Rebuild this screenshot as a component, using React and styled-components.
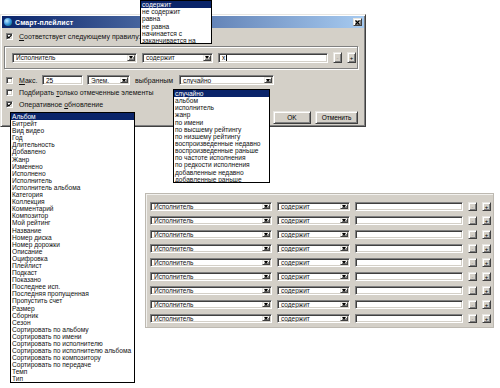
import React from "react";
import styled, { createGlobalStyle } from "styled-components";

const GlobalStyle = createGlobalStyle`
  html, body {
    margin: 0;
    padding: 0;
    background: #fff;
  }
  body {
    font-family: "Liberation Sans", Arial, sans-serif;
    font-size: 7px;
    color: #000;
  }
`;

const fields = [
  "Альбом", "Битрейт", "Вид видео", "Год", "Длительность", "Добавлено", "Жанр",
  "Изменено", "Исполнено", "Исполнитель", "Исполнитель альбома", "Категория",
  "Коллекция", "Комментарий", "Композитор", "Мой рейтинг", "Название",
  "Номер диска", "Номер дорожки", "Описание", "Оцифровка", "Плейлист", "Подкаст",
  "Показано", "Последнее исп.", "Последняя пропущенная", "Пропустить счет",
  "Размер", "Сборник", "Сезон", "Сортировать по альбому", "Сортировать по имени",
  "Сортировать по исполнителю", "Сортировать по исполнителю альбома",
  "Сортировать по композитору", "Сортировать по передаче", "Темп", "Тип",
];

const operators = [
  "содержит", "не содержит", "равна", "не равна", "начинается с", "заканчивается на",
];

const orders = [
  "случайно", "альбом", "исполнитель", "жанр", "по имени", "по высшему рейтингу",
  "по низшему рейтингу", "воспроизведенные недавно", "воспроизведенные раньше",
  "по частоте исполнения", "по редкости исполнения", "добавленные недавно",
  "добавленные раньше",
];

export default function App() {
  return (
    <>
      <GlobalStyle />
      <Desktop>
        <Dialog>
          <TitleBar>
            <TitleIcon />
            <Title>Смарт-плейлист</Title>
            <CloseButton>
              <svg width="5" height="5" viewBox="0 0 5 5">
                <path d="M0.5 0.5 L4.5 4.5 M4.5 0.5 L0.5 4.5" stroke="#000" strokeWidth="1.2" />
              </svg>
            </CloseButton>
          </TitleBar>
          <Body>
            <Check checked>
              <u>С</u>оответствует следующему правилу:
            </Check>
            <Group>
              <Combo $w={125} value="Исполнитель" />
              <Combo $w={71} value="содержит" />
              <Input $w={110}>
                x<Caret />
              </Input>
              <SmallButton disabled>-</SmallButton>
              <SmallButton>+</SmallButton>
            </Group>
            <LimitRow>
              <Check $w={32}>
                <u>М</u>акс.
              </Check>
              <Input $w={41}>25</Input>
              <Combo $w={43} value="Элем." />
              <Caption $w={41}>выбранным</Caption>
              <Combo $w={95} value="случайно" />
            </LimitRow>
            <Check $top={3}>
              Подбирать <u>т</u>олько отмеченные элементы
            </Check>
            <Check checked $top={4}>
              Оперативное <u>о</u>бновление
            </Check>
            <Buttons>
              <PushButton $w={38}>OK</PushButton>
              <PushButton $w={43}>Отменить</PushButton>
            </Buttons>
          </Body>
        </Dialog>

        <RulesPanel>
          {Array.from({ length: 9 }).map((_, i) => (
            <RuleRow key={i}>
              <Combo $w={122} $h={9} value="Исполнитель" />
              <Combo $w={73} $h={9} value="содержит" />
              <Input $w={108} $h={9} />
              <SmallButton $h={9} disabled>-</SmallButton>
              <SmallButton $h={9}>+</SmallButton>
            </RuleRow>
          ))}
        </RulesPanel>

        <DropList $x={140} $y={0} $w={72} $h={44}>
          {operators.map((o, i) => (
            <Item key={o} $selected={i === 0} $ih={7.2}>{o}</Item>
          ))}
        </DropList>

        <DropList $x={173} $y={89} $w={97} $h={94}>
          {orders.map((o, i) => (
            <Item key={o} $selected={i === 0} $ih={7.15}>{o}</Item>
          ))}
        </DropList>

        <DropList $x={10} $y={112} $w={125} $h={271}>
          {fields.map((f, i) => (
            <Item key={f} $selected={i === 0} $ih={7.1}>{f}</Item>
          ))}
        </DropList>
      </Desktop>
    </>
  );
}

function Check({ checked, children, $w, $top }) {
  return (
    <CheckLabel $w={$w} $top={$top}>
      <CheckBox>
        {checked && (
          <svg width="5" height="5" viewBox="0 0 5 5">
            <path d="M0.4 2.4 L1.9 3.9 L4.6 0.9" fill="none" stroke="#000" strokeWidth="1.1" />
          </svg>
        )}
      </CheckBox>
      <span>{children}</span>
    </CheckLabel>
  );
}

function Combo({ value, $w, $h }) {
  return (
    <ComboBox $w={$w} $h={$h}>
      <ComboText>{value}</ComboText>
      <DropButton>
        <Arrow />
      </DropButton>
    </ComboBox>
  );
}

const Desktop = styled.div`
  position: relative;
  width: 500px;
  height: 388px;
  overflow: hidden;
  background: #fff;
`;

const raised = `
  background: #d4d0c8;
  border: 1px solid;
  border-color: #e8e6e1 #404040 #404040 #e8e6e1;
  box-shadow: inset 1px 1px #fff, inset -1px -1px #808080;
`;

const sunken = `
  background: #fff;
  border: 1px solid;
  border-color: #808080 #fff #fff #808080;
  box-shadow: inset 1px 1px #404040, inset -1px -1px #d4d0c8;
`;

const Dialog = styled.div`
  position: absolute;
  left: 0;
  top: 14px;
  width: 366px;
  height: 113px;
  box-sizing: border-box;
  ${raised}
  display: flex;
  flex-direction: column;
`;

const TitleBar = styled.div`
  margin: 1px 1px 0;
  height: 12px;
  display: flex;
  align-items: center;
  padding: 0 2px;
  background: linear-gradient(to right, #0a246a, #a6caf0);
`;

const TitleIcon = styled.span`
  width: 8px;
  height: 8px;
  border-radius: 50%;
  background: radial-gradient(circle at 35% 35%, #bfe9ff, #2a8cd8 55%, #1a6e3a);
  margin-right: 3px;
`;

const Title = styled.span`
  flex: 1;
  color: #fff;
  font-weight: bold;
  font-size: 7px;
  letter-spacing: 0.1px;
`;

const CloseButton = styled.span`
  width: 9px;
  height: 8px;
  box-sizing: border-box;
  ${raised}
  display: flex;
  align-items: center;
  justify-content: center;
`;

const Body = styled.div`
  display: flex;
  flex-direction: column;
  padding: 4px 7px 0 5px;
`;

const CheckLabel = styled.label`
  display: flex;
  align-items: center;
  gap: 6px;
  height: 8px;
  margin-top: ${(p) => p.$top || 0}px;
  width: ${(p) => (p.$w ? `${p.$w}px` : "auto")};
  flex-shrink: 0;
  white-space: nowrap;
  color: #111;
`;

const CheckBox = styled.span`
  width: 7px;
  height: 7px;
  box-sizing: border-box;
  ${sunken}
  display: flex;
  align-items: center;
  justify-content: center;
  flex-shrink: 0;
`;

const Group = styled.div`
  margin: 6px 0 0 -2px;
  width: 354px;
  box-sizing: border-box;
  border: 1px solid #808080;
  box-shadow: 1px 1px #fff, inset 1px 1px #fff;
  padding: 5px 3px 5px 7px;
  display: flex;
  align-items: center;
  gap: 5px;
`;

const ComboBox = styled.div`
  width: ${(p) => p.$w}px;
  height: ${(p) => p.$h || 10}px;
  box-sizing: border-box;
  ${sunken}
  display: flex;
  align-items: center;
  padding: 1px;
  flex-shrink: 0;
`;

const ComboText = styled.span`
  flex: 1;
  padding-left: 2px;
  font-size: 6.5px;
  white-space: nowrap;
  overflow: hidden;
  color: #111;
`;

const DropButton = styled.span`
  width: 8px;
  align-self: stretch;
  box-sizing: border-box;
  ${raised}
  display: flex;
  align-items: center;
  justify-content: center;
`;

const Arrow = styled.span`
  width: 0;
  height: 0;
  border-left: 2.5px solid transparent;
  border-right: 2.5px solid transparent;
  border-top: 3px solid #000;
`;

const Input = styled.div`
  width: ${(p) => p.$w}px;
  height: ${(p) => p.$h || 10}px;
  box-sizing: border-box;
  ${sunken}
  display: flex;
  align-items: center;
  padding-left: 3px;
  font-size: 6.5px;
  flex-shrink: 0;
`;

const Caret = styled.span`
  display: inline-block;
  width: 1px;
  height: 6px;
  background: #000;
  margin-left: 1px;
`;

const SmallButton = styled.div`
  width: 9px;
  height: ${(p) => p.$h || 11}px;
  box-sizing: border-box;
  ${raised}
  display: flex;
  align-items: center;
  justify-content: center;
  font-size: 6px;
  color: ${(p) => (p.disabled ? "#9a968f" : "#000")};
  flex-shrink: 0;
`;

const LimitRow = styled.div`
  margin-top: 6px;
  display: flex;
  align-items: center;
  gap: 4px;
`;

const Caption = styled.span`
  width: ${(p) => p.$w}px;
  white-space: nowrap;
  padding-left: 1px;
  box-sizing: border-box;
  color: #111;
`;

const Buttons = styled.div`
  display: flex;
  justify-content: flex-end;
  gap: 4px;
  margin-top: 3px;
`;

const PushButton = styled.div`
  width: ${(p) => p.$w}px;
  height: 13px;
  box-sizing: border-box;
  ${raised}
  display: flex;
  align-items: center;
  justify-content: center;
  font-size: 6.5px;
`;

const RulesPanel = styled.div`
  position: absolute;
  left: 145px;
  top: 193px;
  width: 349px;
  height: 135px;
  box-sizing: border-box;
  background: #d4d0c8;
  border: 1px solid #bdb9b1;
  box-shadow: inset 1px 1px #f2f1ee;
  padding: 8px 0 0 4px;
  display: flex;
  flex-direction: column;
  gap: 5px;
`;

const RuleRow = styled.div`
  display: flex;
  align-items: center;
  gap: 5px;
`;

const DropList = styled.div`
  position: absolute;
  left: ${(p) => p.$x}px;
  top: ${(p) => p.$y}px;
  width: ${(p) => p.$w}px;
  height: ${(p) => p.$h}px;
  box-sizing: border-box;
  background: #fff;
  border: 1px solid #000;
  overflow: hidden;
`;

const Item = styled.div`
  height: ${(p) => p.$ih}px;
  line-height: ${(p) => p.$ih}px;
  padding-left: 1px;
  font-size: 6.6px;
  white-space: nowrap;
  background: ${(p) => (p.$selected ? "#0a246a" : "transparent")};
  color: ${(p) => (p.$selected ? "#fff" : "#111")};
`;
